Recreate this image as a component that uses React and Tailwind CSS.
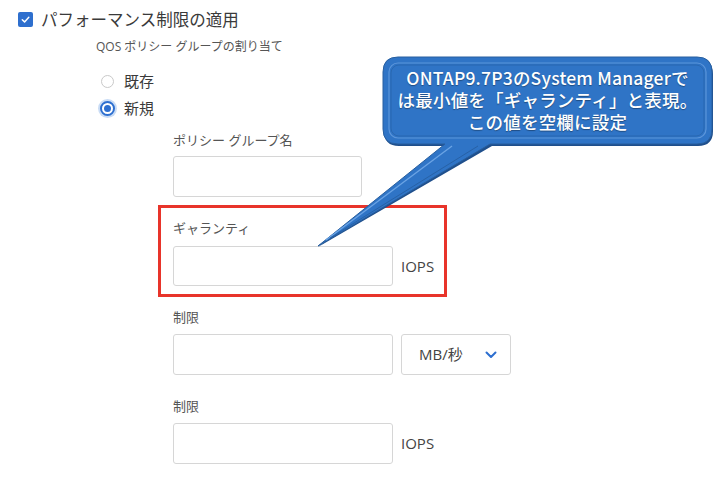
import React from 'react';

const Field = ({ w = 'w-[220px]', h = 'h-[41px]' }) => (
  <div className={`${w} ${h} shrink-0 border border-[#d6d6d6] rounded-[3px] bg-white`}></div>
);

const Callout = () => (
  <>
    <svg className="absolute inset-0 pointer-events-none" width="715" height="484" viewBox="0 0 715 484">
      {/* shadow */}
      <path
        d="M 399 59 H 698 Q 713 59 713 74 V 131 Q 713 146 698 146 H 492 L 318 247 L 446 146 H 399 Q 384 146 384 131 V 74 Q 384 59 399 59 Z"
        fill="#1f4f8c"
      />
      <path
        d="M 398 57 H 697 Q 712 57 712 72 V 129 Q 712 144 697 144 H 490 L 318 246 L 445 144 H 398 Q 383 144 383 129 V 72 Q 383 57 398 57 Z"
        fill="#2f74c6"
        stroke="#285f9f"
        strokeWidth="1"
      />
      <rect x="389" y="63" width="317" height="75" rx="9" fill="none" stroke="#5b95da" strokeWidth="1.2" />
      <rect x="391" y="65" width="313" height="71" rx="8" fill="none" stroke="#245a9a" strokeWidth="0.8" opacity="0.6" />
      <path d="M 452 146 L 326 240" stroke="#6aa3e4" strokeWidth="1.4" />
      <path d="M 478 146 L 330 238" stroke="#245a9a" strokeWidth="1" opacity="0.7" />
    </svg>
    <div
      className="absolute left-[383px] top-[67px] w-[329px] text-center text-white text-[17.5px] leading-[22px] font-medium whitespace-nowrap tracking-[0.2px] [text-shadow:0_1px_1px_rgba(0,0,0,0.35)]"
      style={{ fontFamily: '"Noto Sans CJK JP", sans-serif' }}
    >
      ONTAP9.7P3のSystem Managerで
      <br />
      は最小値を「ギャランティ」と表現。
      <br />
      この値を空欄に設定
    </div>
  </>
);

export default function App() {
  return (
    <div
      className="relative w-[715px] h-[484px] bg-white overflow-hidden"
      style={{ fontFamily: '"Open Sans", "Noto Sans CJK JP", sans-serif' }}
    >
      {/* checkbox row */}
      <div className="pt-[11px] pl-[18px] flex items-center gap-[8px]">
        <span className="w-[15px] h-[15px] rounded-[2px] bg-[#2e6fce] flex items-center justify-center">
          <svg width="11" height="11" viewBox="0 0 12 12">
            <path d="M2.5 6.2 L5 8.6 L9.6 3.6" fill="none" stroke="white" strokeWidth="1.6" strokeLinecap="round" strokeLinejoin="round" />
          </svg>
        </span>
        <span className="text-[16.5px] leading-[17px] text-[#3a3a3a]">パフォーマンス制限の適用</span>
      </div>

      <div className="ml-[96px] mt-[11px] text-[12px] leading-[16px] text-[#555]">QOS ポリシー グループの割り当て</div>

      {/* radios */}
      <div className="ml-[101px] mt-[16px] flex flex-col gap-[7px]">
        <div className="flex items-center gap-[10px] h-[20px]">
          <span className="w-[13px] h-[13px] rounded-full border border-[#c9c9c9] bg-white"></span>
          <span className="text-[15px] leading-[20px] text-[#3a3a3a]">既存</span>
        </div>
        <div className="flex items-center gap-[9px] h-[20px] -ml-[1px]">
          <span className="w-[15px] h-[15px] rounded-full border-2 border-[#2d6fd0] bg-white flex items-center justify-center shadow-[0_0_0_2px_#c9dcf5]">
            <span className="w-[7px] h-[7px] rounded-full bg-[#2d6fd0]"></span>
          </span>
          <span className="text-[15px] leading-[20px] text-[#3a3a3a]">新規</span>
        </div>
      </div>

      {/* fields */}
      <div className="ml-[158px] mt-[13px] text-[#555]">
        <div className="px-[15px]">
          <div className="text-[13px] leading-[18px]">ポリシー グループ名</div>
          <div className="mt-[7px]">
            <Field w="w-[189px]" />
          </div>
        </div>

        <div className="w-[289px] mt-[8px] border-[3px] border-[#e8342a] pt-[11px] pl-[12px] pb-[8px]">
          <div className="text-[13px] leading-[18px]">ギャランティ</div>
          <div className="mt-[9px] flex items-center gap-[8px]">
            <Field h="h-[40px]" />
            <span className="text-[15px] text-[#444]">IOPS</span>
          </div>
        </div>

        <div className="px-[15px] mt-[11px]">
          <div className="text-[13px] leading-[18px]">制限</div>
          <div className="mt-[8px] flex items-center gap-[8px]">
            <Field />
            <div className="w-[110px] h-[41px] shrink-0 border border-[#d6d6d6] rounded-[3px] flex items-center justify-between pl-[17px] pr-[13px]">
              <span className="text-[15px] text-[#444]">MB/秒</span>
              <svg width="12" height="8" viewBox="0 0 12 8">
                <path d="M1.5 1.5 L6 6 L10.5 1.5" fill="none" stroke="#2d6fd0" strokeWidth="2" strokeLinecap="round" strokeLinejoin="round" />
              </svg>
            </div>
          </div>
        </div>

        <div className="px-[15px] mt-[22px]">
          <div className="text-[13px] leading-[18px]">制限</div>
          <div className="mt-[8px] flex items-center gap-[8px]">
            <Field />
            <span className="text-[15px] text-[#444]">IOPS</span>
          </div>
        </div>
      </div>

      <Callout />
    </div>
  );
}
